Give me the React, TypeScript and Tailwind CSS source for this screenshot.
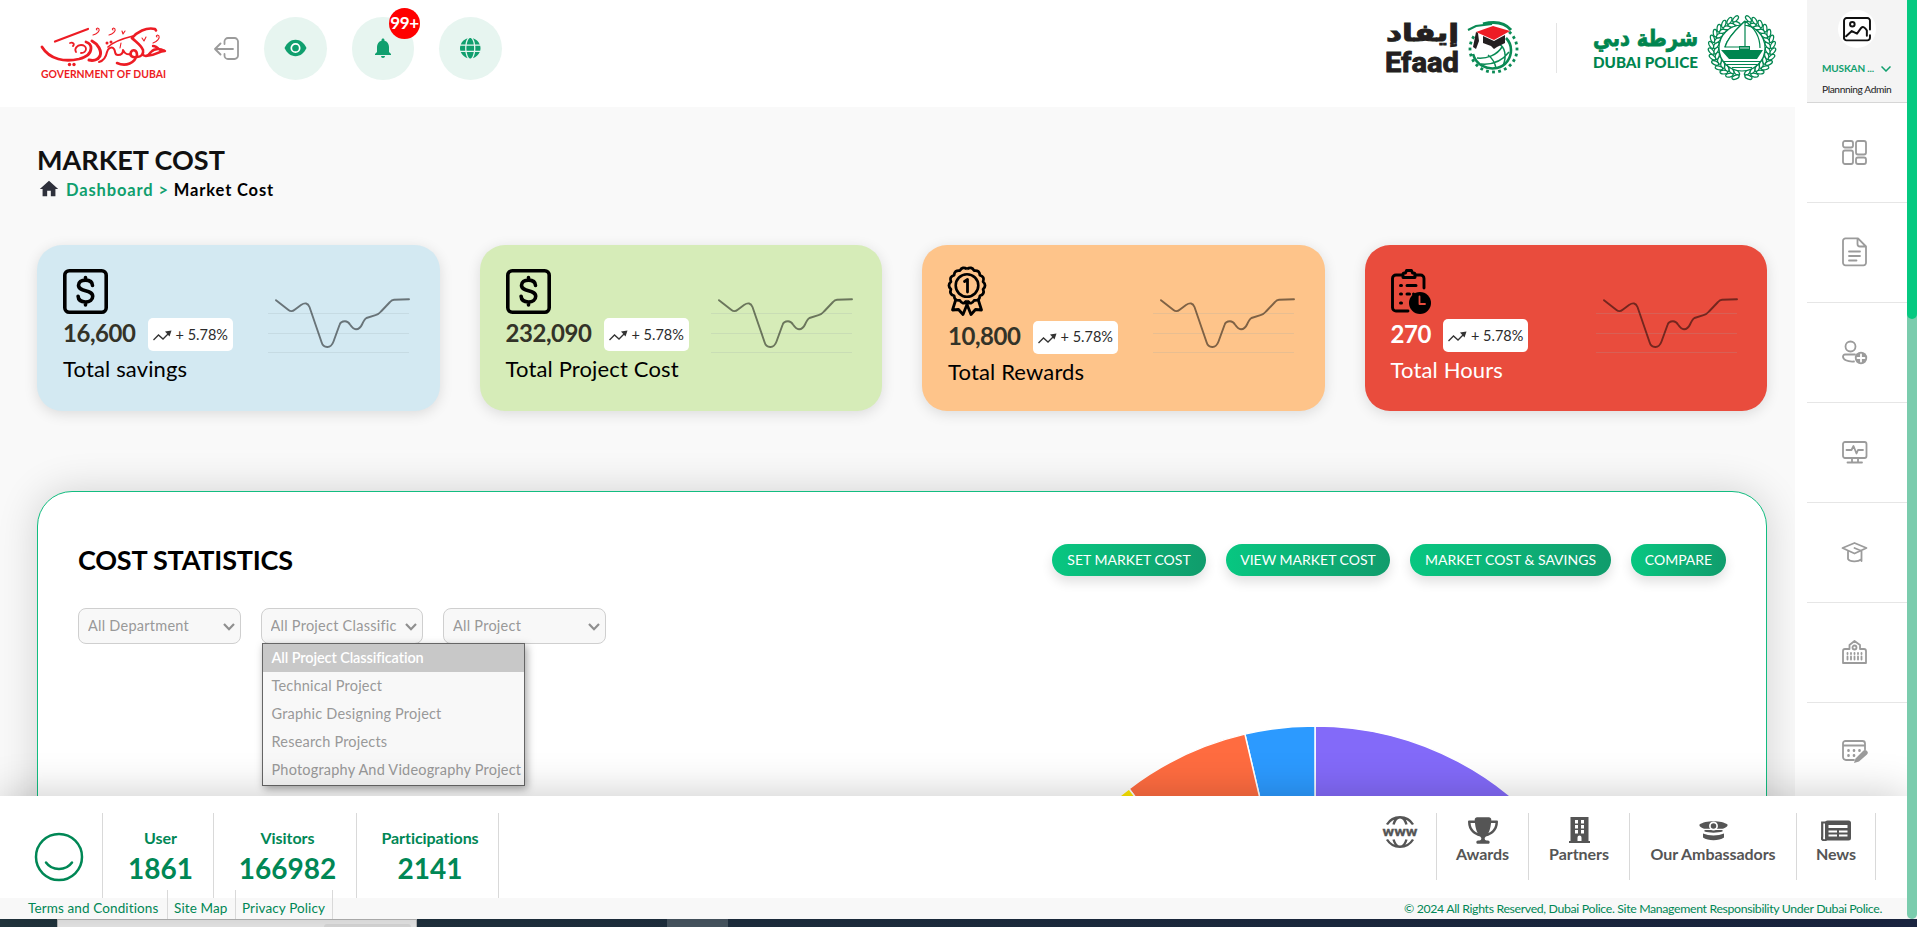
import type { ReactNode } from "react";
import { MdHome, MdNotifications } from "react-icons/md";
import { FaGlobe, FaTrophy } from "react-icons/fa6";

const LATIN = "Lato, 'Noto Sans', sans-serif";
const ARABIC = "'DejaVu Sans', sans-serif";

/* ---------- logos ---------- */

function GovernmentLogo() {
  return (
    <svg className="h-[56px] w-[128px] shrink-0 overflow-visible" viewBox="0 0 128 56" fill="#ed1c24">
      <g fill="none" stroke="#ed1c24" strokeLinecap="round" strokeLinejoin="round">
        <path d="M1 21C9 34 24 36 38 33c8-2 12-6 12-11 0-3-2-5-5-6" strokeWidth="2.800" />
        <path d="M14 15.500L47 3" strokeWidth="2.200" />
        <path d="M35 26c-2-3 1-7 5-7 3 0 5 2 5 4s-2 4-5 4M29 17c3-1 5 1 3 3" strokeWidth="1.800" />
        <path d="M51 15c6 3 10 10 8 15-2 4-7 5-11 4" strokeWidth="3" />
        <path d="M58 36c4-1 7-5 8-10 1-4 5-6 7-3s0 6 4 6c3 0 5-2 5-5 2 4 4 5 8 4" strokeWidth="2" />
        <path d="M67 21c4-4 13-8 25-11" strokeWidth="1.700" />
        <path d="M76 37c9 4 18 0 20-8 0-5-4-6-6-3-2 4 2 6 6 5 4 0 7-3 6-7-2-5-7-8-11-12" strokeWidth="2.600" />
        <path d="M91 12c5-6 14-11 23-9l1 1.500" strokeWidth="2.600" />
        <path d="M102 29c3 2 6 0 8-3 4-4 8-4 14-1-7 0-9 5-19 5M112 20c3 0 5 2 7 4" strokeWidth="2.400" />
        <path d="M52 9c4-1 7-4 6-6s-4 0-2 1M68 9c4-1 7-4 6-6s-4 0-2 1M112 17c4-1 7-5 6-7s-4 0-2 1M81 5l1 3 2-3M101 12l2 3 2-4M80 17l-1 5" strokeWidth="1.100" />
      </g>
      <circle cx="28.500" cy="38.500" r="1.700" />
      <circle cx="33" cy="38.500" r="1.700" />
      <circle cx="66" cy="17" r="1.500" />
      <circle cx="70" cy="16" r="1.500" />
      <text x="0" y="52" fontFamily={LATIN} fontWeight="700" fontSize="10.800" textLength="125" lengthAdjust="spacingAndGlyphs">
        GOVERNMENT OF DUBAI
      </text>
    </svg>
  );
}

function EfaadLogo() {
  const dots = Array.from({ length: 24 }, (_, i) => i).filter((i) => i < 15 || i > 20);
  return (
    <svg className="h-[54px] w-[134px] shrink-0 overflow-visible" viewBox="0 0 134 54">
      <g fill="#231f20" stroke="#231f20">
        <text x="74" y="19" strokeWidth=".9" direction="rtl" textAnchor="start" fontFamily={ARABIC} fontWeight="700" fontSize="24" textLength="73" lengthAdjust="spacingAndGlyphs">
          إيفاد
        </text>
        <text x="0" y="50" strokeWidth=".9" fontFamily="Roboto, sans-serif" fontWeight="700" fontSize="27.500" textLength="74" lengthAdjust="spacingAndGlyphs">
          Efaad
        </text>
      </g>
      {dots.map((i) => {
        const a = (i * 15 * Math.PI) / 180;
        return (
          <rect key={i} x="-1.400" y="-1.400" width="2.800" height="2.800" fill="#0a8a55"
            transform={`translate(${108.5 + 23.5 * Math.cos(a)} ${27 + 23 * Math.sin(a)}) rotate(${i * 15})`} />
        );
      })}
      <circle cx="107" cy="28" r="19" fill="#fff" />
      <g fill="none" stroke="#0a8a55" strokeWidth="1.500">
        <path d="M88 32c3 11 14 16 24 14 9-2 14-10 14-18 0-5-2-9-5-12" strokeWidth="2.600" />
        <path d="M92 36c10 1 20-3 25-11M96 42c12 1 22-4 28-12M114 22c6 3 8 12 4 22M103 33c4 3 7 8 8 13" />
        <path d="M98 2c12-3 22-1 28 6" strokeWidth="3" />
      </g>
      <path d="M91 10l17-6 17 5-16 9z" fill="#ed1c24" />
      <path d="M91 10l-3 15 3 2 3-8-1-8zM98 14l11 5 11-6v8l-8 4-3 2-3-3-8-3z" fill="#231f20" />
      <path d="M83 8l8-4 16-2" fill="none" stroke="#0a8a55" strokeWidth="2" />
    </svg>
  );
}

function PoliceLogo() {
  const leaves = Array.from({ length: 14 }, (_, i) => 12 + i * 12);
  const green = "#00854f";
  return (
    <svg className="h-[64px] w-[184px] shrink-0 overflow-visible" viewBox="0 0 184 64">
      <g fill={green}>
        <text x="105" y="30" stroke={green} strokeWidth=".8" direction="rtl" textAnchor="start" fontFamily={ARABIC} fontWeight="700" fontSize="23" textLength="105" lengthAdjust="spacingAndGlyphs">
          شرطة دبي
        </text>
        <text x="0" y="52" fontFamily={LATIN} fontWeight="900" fontSize="15.500" textLength="105" lengthAdjust="spacingAndGlyphs">
          DUBAI POLICE
        </text>
      </g>
      <g transform="translate(149 32)">
        <g fill="#fff" stroke={green} strokeWidth="1.200">
          {leaves.flatMap((deg) =>
            [1, -1].flatMap((side) => {
              const a = ((90 + side * deg) * Math.PI) / 180;
              const tangent = 90 + side * deg + side * 90;
              return [26, 31].map((r, k) => (
                <ellipse key={`${deg}${side}${r}`} rx="3.800" ry="1.900"
                  transform={`translate(${r * Math.cos(a)} ${r * 0.96 * Math.sin(a)}) rotate(${tangent + side * (k ? -35 : 35)})`} />
              ));
            }),
          )}
        </g>
        <circle r="23" fill="#fff" stroke={green} strokeWidth="1.200" />
        <path d="M3-27C-3-21-14-12-17-1" fill="none" stroke={green} strokeWidth="1.200" />
        <path d="M3-27C-3-20-14-12-17-1H3z" fill="#fff" stroke="none" />
        <path d="M3-27C-3-21-14-12-17-1H3M3-27C13-20 18-12 18 0M3-27v26" fill="none" stroke={green} strokeWidth="1.200" />
        <path d="M-21 2h18v-4h11v4h13l-6 9h-28z" fill={green} />
        <path d="M-2 0h9" stroke="#fff" strokeWidth=".8" />
        <path d="M-18 13.500h36M-15 16.500h30M-10 19.500h20" stroke={green} strokeWidth="1.200" />
      </g>
    </svg>
  );
}

/* ---------- header ---------- */

function HeaderButton({ children }: { children: ReactNode }) {
  return (
    <div className="relative flex size-[62.500px] items-center justify-center rounded-full bg-[#e7f5f0] text-[#109f6e]">{children}</div>
  );
}

function Header() {
  return (
    <header className="flex h-[107px] shrink-0 items-start bg-white pl-[41px] pr-[18px]">
      <div className="mt-[26px]"><GovernmentLogo /></div>
      <svg className="ml-[45px] mt-9 h-[26px] w-[26px]" viewBox="0 0 26 26" fill="none" stroke="#9b9b9b" strokeWidth="1.800" strokeLinecap="round" strokeLinejoin="round">
        <path d="M10.500 8V5.500a3.500 3.500 0 0 1 3.500-3.500h6.500a3.500 3.500 0 0 1 3.500 3.500v14a3.500 3.500 0 0 1-3.500 3.500H14a3.500 3.500 0 0 1-3.500-3.500V18M19 13H1M6.500 7.500L1 13l5.500 5.500" />
      </svg>
      <div className="ml-6 mt-[17px] flex gap-[25px]">
        <HeaderButton>
          <svg className="h-[18px] w-[23px]" viewBox="0 0 23 18">
            <path d="M.5 9C3 4 6.500.8 11.500.8S20 4 22.500 9c-2.500 5-6 8.200-11 8.200S3 14 .5 9z" fill="currentColor" />
            <circle cx="11.500" cy="9" r="4.200" fill="#109f6e" stroke="#fff" strokeWidth="1.700" />
          </svg>
        </HeaderButton>
        <HeaderButton>
          <MdNotifications className="size-6" />
          <span className="absolute -right-[6px] -top-[9px] flex size-[31px] items-center justify-center rounded-full bg-[#ff0000] pb-[3px] text-[17px] leading-none font-bold tracking-[-0.300px] text-white">
            99+
          </span>
        </HeaderButton>
        <HeaderButton><FaGlobe className="size-[20.500px]" /></HeaderButton>
      </div>
      <div className="ml-auto mt-[22px]"><EfaadLogo /></div>
      <div className="ml-[37px] mt-[23px] h-[50px] w-[1.500px] bg-[#e4e4e4]" />
      <div className="ml-[36px] mt-4"><PoliceLogo /></div>
    </header>
  );
}

/* ---------- summary cards ---------- */

function DollarIcon() {
  return (
    <svg className="size-[45px]" viewBox="0 0 45 45" fill="none" stroke="#000" strokeWidth="3.600" strokeLinecap="round">
      <rect x="1.800" y="1.800" width="41.400" height="41.400" rx="4.500" />
      <path d="M29.500 16.500c-.2-3.600-3-5.400-7-5.400-4.200 0-7 2-7 5.200 0 7.200 14.200 3.600 14.200 11 0 3.500-2.800 5.700-7.200 5.700-4.400 0-7.200-2.200-7.400-5.800M22.500 8.500v2M22.500 34v2" />
    </svg>
  );
}

function MedalIcon() {
  const points = Array.from({ length: 14 }, (_, i) => {
    const a = (i * 2 * Math.PI) / 14 - Math.PI / 2;
    const b = a + Math.PI / 14;
    const n = a + (2 * Math.PI) / 14;
    const p = (r: number, t: number) => `${19 + r * Math.cos(t)} ${19.5 + r * Math.sin(t)}`;
    return `${i === 0 ? `M${p(16.5, a)}` : ""}Q${p(20, b)} ${p(16.5, n)}`;
  }).join("");
  return (
    <svg className="-mt-[3px] h-[50px] w-[38px] overflow-visible" viewBox="0 0 38 50" fill="none" stroke="#000" strokeWidth="2.800" strokeLinejoin="round">
      <path d={points} />
      <circle cx="19" cy="19.500" r="11.300" strokeWidth="2.600" />
      <path d="M16.500 15.500l3-2v12.500" strokeLinecap="round" />
      <path d="M8 33L4.500 44l6-.5 4.500 5 4-10 4 10 4.500-5 6 .5L30 33M19 38.500l-2-4M19 38.500l2-4" />
    </svg>
  );
}

function ClipboardClockIcon() {
  return (
    <svg className="h-[46px] w-10" viewBox="0 0 40 46" fill="none" stroke="#000" strokeWidth="2.900" strokeLinecap="round" strokeLinejoin="round">
      <path d="M11 6H5a3.500 3.500 0 0 0-3.500 3.500v29A3.500 3.500 0 0 0 5 42h12M24 6h5.500A3.500 3.500 0 0 1 33 9.500V19" />
      <path d="M12 8.500V5.500c0-.8.6-1.500 1.500-1.500h1l1-2.500h5L21.500 4h1c.9 0 1.500.7 1.500 1.500v3z" />
      <path d="M9.500 16.500h1M16 16.500h9M9.500 25h1M16 25h2.500M9.500 34h1M22.500 25h.1" strokeWidth="3" />
      <circle cx="29" cy="34" r="11" fill="#000" stroke="none" />
      <path d="M28.500 27.500v7.500h5.500" stroke="#e94c3d" strokeWidth="1.800" />
    </svg>
  );
}

function Sparkline() {
  return (
    <svg className="mt-[52px] h-[58px] w-[142px]" viewBox="0 0 142 58" fill="none">
      <path d="M0 16.500h141M0 36.500h141M0 55.500h141" stroke="#9aa7ad" strokeOpacity=".22" />
      <path
        d="M8 3.200L20.500 13Q23.500 15.500 27 12.500L33 8Q39 4 41.500 10L53.500 45Q55 50.200 59.500 50Q63.500 50 65.500 44.500L71.500 28Q72.500 24.200 77 24.200Q80 24.200 82 27.500Q85 32 88 32.300Q92 32 94 27.500Q96.500 22 98.500 21L107.500 18.200Q110.500 17.400 113 14.500L122 5Q123.800 2.800 126 2.700L141 2.300"
        stroke="#000" strokeOpacity=".5" strokeWidth="1.900" strokeLinecap="round"
      />
    </svg>
  );
}

function Trend() {
  return (
    <span className="flex h-[33px] w-[85px] items-center gap-1 rounded-[5px] bg-white pl-[5px] text-[14.500px] text-[#2b2b2b]">
      <svg className="mt-0.5 h-[11px] w-[19px]" viewBox="0 0 19 11" fill="none" stroke="#333" strokeWidth="1.300">
        <path d="M.5 10l5-5 4.500 4L16 3" />
        <path d="M12 1.500L18.500.5l-2 6z" fill="#333" stroke="none" />
      </svg>
      + 5.78%
    </span>
  );
}

type CardData = { value: string; label: string; card: string; valueColor: string; labelColor: string; iconBox: string; icon: ReactNode };

const cards: CardData[] = [
  { value: "16,600", label: "Total savings", card: "bg-[#d3e9f2]", valueColor: "text-[#333328]", labelColor: "text-black", iconBox: "h-[45px]", icon: <DollarIcon /> },
  { value: "232,090", label: "Total Project Cost", card: "bg-[#d6ecb8]", valueColor: "text-[#333328]", labelColor: "text-black", iconBox: "h-[45px]", icon: <DollarIcon /> },
  { value: "10,800", label: "Total Rewards", card: "bg-[#fec48a]", valueColor: "text-[#333328]", labelColor: "text-black", iconBox: "h-[47.500px]", icon: <MedalIcon /> },
  { value: "270", label: "Total Hours", card: "bg-[#e94c3d]", valueColor: "text-white", labelColor: "text-white", iconBox: "h-[46px]", icon: <ClipboardClockIcon /> },
];

function SummaryCard({ data }: { data: CardData }) {
  return (
    <div className={`flex h-[166px] justify-between rounded-[25px] pl-[26px] pr-[29.500px] shadow-[0_3px_14px_rgba(0,0,0,0.12)] ${data.card}`}>
      <div className="pt-6">
        <div className={`flex items-start ${data.iconBox}`}>{data.icon}</div>
        <div className="mt-1 flex items-center gap-3">
          <span className={`-mt-[3px] text-[24px] leading-none font-bold tracking-[-0.450px] ${data.valueColor}`}>{data.value}</span>
          <Trend />
        </div>
        <div className={`mt-[3px] text-[22px] leading-[30px] tracking-[0.150px] ${data.labelColor}`}>{data.label}</div>
      </div>
      <Sparkline />
    </div>
  );
}

/* ---------- cost statistics ---------- */

const PIE = { cx: 308, cy: 308, r: 307 };
const slices = [
  { from: 0, to: 120, color: "#836af9" },
  { from: -13.2, to: 0, color: "#2c9aff" },
  { from: -37.3, to: -13.2, color: "#ff6c40" },
  { from: -90, to: -37.3, color: "#ffe800" },
];

function slicePath(from: number, to: number) {
  const pt = (deg: number) => {
    const a = (deg * Math.PI) / 180;
    return `${PIE.cx + PIE.r * Math.sin(a)} ${PIE.cy - PIE.r * Math.cos(a)}`;
  };
  return `M${PIE.cx} ${PIE.cy}L${pt(from)}A${PIE.r} ${PIE.r} 0 0 1 ${pt(to)}Z`;
}

function Pie() {
  return (
    <svg className="h-[616px] w-[616px] shrink-0" viewBox="0 0 616 616">
      {slices.map((s) => (
        <path key={s.color} d={slicePath(s.from, s.to)} fill={s.color} stroke="#fff" strokeWidth="1.500" />
      ))}
    </svg>
  );
}

const options = ["All Project Classification", "Technical Project", "Graphic Designing Project", "Research Projects", "Photography And Videography Project"];

function Select({ label, children }: { label: string; children?: ReactNode }) {
  return (
    <div className="relative h-9 w-[162.500px]">
      <div className="flex h-full items-center justify-between rounded-lg border border-[#cfcfcf] bg-[#f8f8f8] pb-px pl-[9px] pr-[5px] text-[14.500px] tracking-[0.250px] text-[#999]">
        <span className="w-[127px] overflow-hidden whitespace-nowrap">{label}</span>
        <svg className="mt-[3px] h-2 w-3" viewBox="0 0 12 8" fill="none" stroke="#8f8f8f" strokeWidth="2.200"><path d="M1 1l5 5.200L11 1" /></svg>
      </div>
      {children}
    </div>
  );
}

function CostStatistics() {
  return (
    <section className="mt-20 h-[620px] rounded-[35px] border border-[#12bd80] bg-white pl-[40px] pr-[40px] pt-[52px] shadow-[0_0_40px_rgba(0,0,0,0.16)]">
      <div className="flex h-8 items-center justify-between">
        <h2 className="text-[27px] leading-8 font-bold tracking-[-0.200px] text-black">COST STATISTICS</h2>
        <div className="flex gap-5 text-[14px] text-white [&>button]:h-8 [&>button]:rounded-full [&>button]:bg-linear-to-r [&>button]:from-[#07c781] [&>button]:to-[#109c6c] [&>button]:pb-0.5 [&>button]:shadow-[0_6px_12px_rgba(0,0,0,0.12)]">
          <button className="w-[154px]">SET MARKET COST</button>
          <button className="w-[164px]">VIEW MARKET COST</button>
          <button className="w-[201px]">MARKET COST &amp; SAVINGS</button>
          <button className="w-[95px]">COMPARE</button>
        </div>
      </div>
      <div className="mt-8 flex gap-5">
        <Select label="All Department" />
        <Select label="All Project Classific">
          <ul className="absolute left-[1px] top-[35px] z-10 w-[263px] border border-[#666] bg-[#f8f8f8] pb-[1px] text-[14.500px] leading-7 tracking-[0.200px] whitespace-nowrap text-[#999] shadow-[2px_3px_8px_rgba(0,0,0,0.35)]">
            {options.map((o, i) => (
              <li key={o} className={i === 0 ? "h-7 bg-[#c8c8c8] pl-[9px] font-semibold tracking-[-0.100px] text-white" : "h-7 pl-[9px]"}>{o}</li>
            ))}
          </ul>
        </Select>
        <Select label="All Project" />
      </div>
      <div className="mt-[81px] flex justify-end pr-[103px]"><Pie /></div>
    </section>
  );
}

/* ---------- sidebar ---------- */

const sidebarIcons: ReactNode[] = [
  <g key="dashboard">
    <rect x="1" y="1" width="10" height="6.500" rx="2" />
    <rect x="1" y="10.500" width="10" height="13.500" rx="2" />
    <rect x="14" y="1" width="10" height="13.500" rx="2" />
    <rect x="14" y="17.500" width="10" height="6.500" rx="2" />
  </g>,
  <g key="document" transform="translate(0 -1.500)">
    <path d="M16-.2H3.500a2.500 2.500 0 0 0-2.500 2.500v22a2.500 2.500 0 0 0 2.500 2.500h18a2.500 2.500 0 0 0 2.500-2.500V8zM15.500 0v5.500A2.500 2.500 0 0 0 18 8h6" />
    <path d="M7 13h11M7 17.500h11M7 22h7.500" />
  </g>,
  <g key="user">
    <circle cx="8.500" cy="6.500" r="5" />
    <path d="M13 14.500H3a2 2 0 0 0-2 2c0 3 4 5.500 11 5" />
    <circle cx="19" cy="18" r="6.200" fill="#9b9b9b" stroke="none" />
    <path d="M19 14.500v7M15.500 18h7" stroke="#fff" />
  </g>,
  <g key="monitor">
    <rect x="1" y="2" width="23.500" height="16" rx="2" />
    <path d="M10 18.500v4M16 18.500v4M5.500 22.500h14.500M4.500 10h5l2-4 3 7.500 1.500-3.500h5" />
  </g>,
  <g key="graduation" transform="translate(0 -.5)">
    <path d="M12.500 3.500l12 5-12 5.500L.5 8.500zM6 11.500v8c2 3 10 3 13 .5M12.500 8.500l7 3v10" />
  </g>,
  <g key="building" transform="translate(0 -1)">
    <path d="M1 24V12a2 2 0 0 1 2-2h4.500V6l5-4 5.500 4v4H22a2 2 0 0 1 2 2v12z" />
    <circle cx="12.500" cy="8.500" r="2" />
    <path d="M5.500 14v1M9 14v1M12.500 14v1M16 14v1M19.500 14v1M5.500 17.500v3M9 17.500v3M12.500 17.500v3M16 17.500v3M19.500 17.500v3" />
  </g>,
  <g key="calendar" transform="translate(0 -.5)">
    <path d="M12 20.500H4a3 3 0 0 1-3-3V4a2.500 2.500 0 0 1 2.500-2.500h17A2.500 2.500 0 0 1 23 4v6M1 6h22" />
    <path d="M6.500 10.800v.4M12 10.800v.4M17.500 10.800v.4M6.500 15.800v.4M12 15.800v.4" strokeWidth="2.600" />
    <path d="M12 23.500l1.500-4.500 7.500-7.500a2 2 0 0 1 4 3.600L17 22z" fill="#9b9b9b" stroke="none" />
  </g>,
];

function Sidebar() {
  return (
    <aside className="ml-3 flex w-[100px] shrink-0 flex-col bg-white">
      <div className="flex h-[103px] shrink-0 flex-col border-b border-[#d6d6d6] bg-[#f4f4f4] pl-[15px]">
        <div className="mt-2.5 ml-4 flex size-[38px] items-center justify-center rounded-full bg-white">
          <svg className="h-[25px] w-[28px]" viewBox="0 0 27 24" fill="none" stroke="#111" strokeWidth="1.900" strokeLinecap="round" strokeLinejoin="round">
            <path d="M26 12V3.500A2.500 2.500 0 0 0 23.500 1h-20A2.500 2.500 0 0 0 1 3.500v16A2.500 2.500 0 0 0 3.500 22.500h20a2.500 2.500 0 0 0 2.500-2.500v-2.500" />
            <circle cx="9" cy="7" r="2.200" />
            <path d="M3 18.500l5.500-5 5 2.500 4-5.500c2-2 4 0 5.500 2.500v5" />
          </svg>
        </div>
        <div className="mt-[12.500px] flex h-4 items-center gap-[7px] text-[10px] font-bold tracking-[-0.150px] text-[#109f6e]">
          MUSKAN ...
          <svg className="h-[6px] w-2.5" viewBox="0 0 10 6" fill="none" stroke="#109f6e" strokeWidth="1.500"><path d="M.5.5L5 5 9.500.5" /></svg>
        </div>
        <div className="mt-[4px] h-4 text-[10.200px] leading-4 tracking-[-0.400px] whitespace-nowrap text-[#222]">Plannning Admin</div>
      </div>
      {sidebarIcons.map((icon, i) => (
        <div key={i} className="flex h-[100px] shrink-0 items-center justify-center border-b border-[#e6e6e6] pr-[5px]">
          <svg className="size-[25px] overflow-visible" viewBox="0 0 25 25" fill="none" stroke="#9b9b9b" strokeWidth="1.800" strokeLinecap="round" strokeLinejoin="round">{icon}</svg>
        </div>
      ))}
    </aside>
  );
}

/* ---------- footer ---------- */

function Stat({ label, value, width }: { label: string; value: string; width: string }) {
  return (
    <div className={`flex h-[85px] flex-col items-center border-r border-[#d9d9d9] pt-[15px] font-bold text-[#008755] ${width}`}>
      <span className="text-[16px] leading-5 tracking-[-0.050px]">{label}</span>
      <span className="mt-[3px] text-[28px] leading-[34px]">{value}</span>
    </div>
  );
}

function QuickLink({ label, width, children }: { label: string; width: string; children: ReactNode }) {
  return (
    <div className={`flex h-[67px] flex-col items-center border-r border-[#d9d9d9] text-[16px] font-bold tracking-[-0.050px] text-[#555] ${width}`}>
      <div className="mt-[3px] flex h-[28px] items-center">{children}</div>
      <span className="leading-[20px]">{label}</span>
    </div>
  );
}

function Footer() {
  return (
    <footer className="relative z-20 flex h-[123px] shrink-0 flex-col bg-white shadow-[0_0_40px_rgba(0,0,0,0.22)]">
      <div className="flex h-[102px] shrink-0 pt-[17px]">
        <div className="flex h-[85px] w-[103px] items-start border-r border-[#d9d9d9] pl-[34px] pt-[19px]">
          <svg className="size-[50px]" viewBox="0 0 50 50" fill="none" stroke="#008755" strokeWidth="2.500" strokeLinecap="round">
            <circle cx="25" cy="25" r="23" />
            <path d="M12 30.500c6 8.500 20 8.500 26 0" />
          </svg>
        </div>
        <Stat label="User" value="1861" width="w-[111px] pl-[5px]" />
        <Stat label="Visitors" value="166982" width="w-[143px] pl-[5px]" />
        <Stat label="Participations" value="2141" width="w-[142px] pl-[5px]" />
        <div className="ml-auto flex h-[67px] w-[61px] border-r border-[#d9d9d9] pl-[7px] pt-[3px]">
          <svg className="h-[32px] w-[34px] overflow-visible" viewBox="0 0 34 32" fill="none" stroke="#555" strokeWidth="2.400">
            <path d="M4 8.500C7 3.500 11.500 1.200 17 1.200S27 3.500 30 8.500M4 23.500c3 5 7.500 7.300 13 7.300S27 28.500 30 23.500M10.500 8.500C12 3.500 14 1.200 17 1.200s5 2.300 6.500 7.300M10.500 23.500c1.500 5 3.500 7.300 6.500 7.300s5-2.300 6.500-7.300" />
            <text x="-.5" y="20" fill="#555" stroke="#555" strokeWidth=".3" fontFamily="Roboto, sans-serif" fontWeight="700" fontSize="13" textLength="35" lengthAdjust="spacingAndGlyphs">www</text>
          </svg>
        </div>
        <QuickLink label="Awards" width="w-[92px]"><FaTrophy className="h-[27px] w-[30px]" /></QuickLink>
        <QuickLink label="Partners" width="w-[101px]">
          <svg className="h-[26px] w-[21px]" viewBox="0 0 21 26">
            <path d="M1.500 0h18v24H21v2H0v-2h1.500z" fill="currentColor" />
            <path d="M6 3h3v3.500H6zM12 3h3v3.500h-3zM6 8h3v3.500H6zM12 8h3v3.500h-3zM6 13h3v3.500H6zM12 13h3v3.500h-3zM8.500 24v-3.500a2 2 0 0 1 4 0V24z" fill="#fff" />
          </svg>
        </QuickLink>
        <QuickLink label="Our Ambassadors" width="w-[167px]">
          <svg className="h-[21px] w-[29px]" viewBox="0 0 29 20" fill="currentColor">
            <path d="M.5 4C6-.5 23-.5 28.500 4c.5 2-2 3.500-5 4.200H5.500C2.500 7.500 0 6 .5 4zM5.500 9.500h18v1.500c-5 1.500-13 1.500-18 0zM4 13c6 2.500 15 2.500 21 0v4c-5 3.500-16 3.500-21 0z" />
            <circle cx="14.500" cy="5.500" r="3.600" stroke="#fff" strokeWidth="1.700" />
          </svg>
        </QuickLink>
        <QuickLink label="News" width="w-[79px]">
          <svg className="h-[21px] w-[30px]" viewBox="0 0 30 20">
            <rect x="4" width="26" height="20" rx="2.500" fill="currentColor" />
            <path d="M5 2H1.200v14.500A2.300 2.300 0 0 0 5.500 18.500" fill="none" stroke="currentColor" strokeWidth="2.200" />
            <path d="M7.500 4.500h19v3h-19zM7.500 10h8.500v2H7.500zM18 10h8.500v2H18zM7.500 14h8.500v2H7.500zM18 14h8.500v2H18z" fill="#fff" />
          </svg>
        </QuickLink>
        <div className="w-[31px]" />
      </div>
      <div className="flex h-[21px] items-end bg-[#f8f8f8] pl-[28px] text-[13.500px] tracking-[0.120px] text-[#008755] [&>a]:h-[29px] [&>a]:border-r [&>a]:border-[#d9d9d9] [&>a]:pt-[8px] [&>a]:leading-5 [&>a]:whitespace-nowrap">
        <a className="w-[140px]">Terms and Conditions</a>
        <a className="w-[68px] pl-[6px]">Site Map</a>
        <a className="w-[97px] pl-[6px]">Privacy Policy</a>
        <span className="ml-auto pr-[25px] text-[12.300px] leading-5 tracking-[-0.340px] whitespace-nowrap">© 2024 All Rights Reserved, Dubai Police. Site Management Responsibility Under Dubai Police.</span>
      </div>
    </footer>
  );
}

export default function App() {
  return (
    <div className="flex h-[927px] w-full flex-col overflow-hidden bg-white font-[Lato,'Noto_Sans',sans-serif]">
      <div className="flex h-[919px] shrink-0">
        <div className="flex min-w-0 flex-1 flex-col">
          <div className="flex h-[796px] shrink-0 overflow-hidden">
            <main className="flex min-w-0 flex-1 flex-col overflow-hidden bg-[#f9f9f9]">
              <Header />
              <div className="pl-[37px] pr-7 pt-[36px]">
                <h1 className="h-[34px] text-[27px] leading-[33px] font-bold text-[#111]">MARKET COST</h1>
                <nav className="flex h-[26px] items-center text-[16.500px] font-bold tracking-[0.850px] text-[#109f6e]">
                  <MdHome className="-mt-[3px] mr-1.5 ml-[1px] size-[22px] text-[#2e303b]" />
                  Dashboard<span className="mx-[5px]">&gt;</span><span className="text-black">Market Cost</span>
                </nav>
                <div className="mt-[42px] grid grid-cols-4 gap-10">
                  {cards.map((c) => <SummaryCard key={c.label} data={c} />)}
                </div>
                <CostStatistics />
              </div>
            </main>
            <Sidebar />
          </div>
          <Footer />
        </div>
        <div className="relative z-30 w-2.5 shrink-0 rounded-b-[5px] bg-[#7accad]">
          <div className="h-[319px] rounded-b-[5px] bg-[#06c981]" />
        </div>
      </div>
      <div className="flex h-2 shrink-0 bg-linear-to-r from-[#22363f] to-[#1b2643]">
        <div className="ml-[57px] flex h-2 w-[360px] justify-end border border-b-0 border-[#bdbdbd] bg-[#f1f1f1] pt-[4px] pr-[5px]">
          <div className="h-[3px] w-[87px] rounded-t bg-[#e2e2e2]" />
        </div>
        <div className="ml-[250px] h-2 w-[61px] bg-[#4a5965]" />
      </div>
    </div>
  );
}
